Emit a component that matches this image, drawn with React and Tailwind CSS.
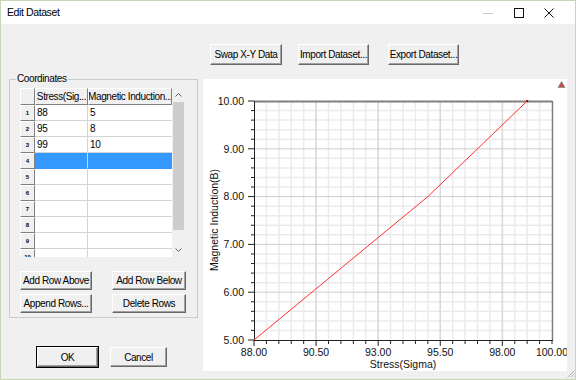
import React from 'react';

const rows = [
  ['88', '5'],
  ['95', '8'],
  ['99', '10'],
  ['', ''],
  ['', ''],
  ['', ''],
  ['', ''],
  ['', ''],
  ['', ''],
  ['', ''],
];

const WinButton = ({ children, className = '', isDefault = false }) => (
  <button
    className={`flex items-center justify-center bg-[#f0f0f0] text-[10px] tracking-[-0.4px] text-black border border-t-white border-l-white border-r-[#696969] border-b-[#696969] shadow-[inset_-1px_-1px_0_#a0a0a0] ${
      isDefault ? 'outline outline-1 outline-black' : ''
    } ${className}`}
  >
    {children}
  </button>
);

// plot area inside the white chart panel
const px = (v) => 51 + (v - 88) * (298 / 12);
const py = (v) => 261 - (v - 5) * (239 / 5);

const Chart = () => {
  const minorX = [];
  const majorX = [];
  for (let i = 1; i < 24; i++) {
    const v = 88 + i * 0.5;
    if (i % 5 === 0) majorX.push(v);
    else minorX.push(v);
  }
  const minorY = [];
  const majorY = [];
  for (let j = 1; j < 25; j++) {
    const v = 5 + j * 0.2;
    if (j % 5 === 0) majorY.push(v);
    else minorY.push(v);
  }
  const ticksX = [];
  for (let i = 0; i <= 24; i++) ticksX.push({ v: 88 + i * 0.5, major: i % 5 === 0 });
  const ticksY = [];
  for (let j = 0; j <= 25; j++) ticksY.push({ v: 5 + j * 0.2, major: j % 5 === 0 });

  return (
    <svg width="364" height="292" viewBox="0 0 364 292" className="block">
      {minorX.map((v) => (
        <line key={`mx${v}`} x1={px(v)} x2={px(v)} y1={22} y2={261} stroke="#ebebeb" strokeWidth="1.5" />
      ))}
      {minorY.map((v) => (
        <line key={`my${v}`} x1={51} x2={349} y1={py(v)} y2={py(v)} stroke="#ebebeb" strokeWidth="1.5" />
      ))}
      {majorX.map((v) => (
        <line key={`Mx${v}`} x1={px(v)} x2={px(v)} y1={22} y2={261} stroke="#d9d9d9" strokeWidth="1.6" />
      ))}
      {majorY.map((v) => (
        <line key={`My${v}`} x1={51} x2={349} y1={py(v)} y2={py(v)} stroke="#cdcdcd" strokeWidth="1" />
      ))}
      {/* frame */}
      <line x1={51} x2={349.5} y1={22.5} y2={22.5} stroke="#7f7f7f" strokeWidth="2" />
      <line x1={349.5} x2={349.5} y1={22} y2={261} stroke="#7f7f7f" strokeWidth="1.5" />
      <line x1={51.5} x2={51.5} y1={22} y2={261.5} stroke="#222" strokeWidth="1" />
      <line x1={51} x2={350} y1={261.5} y2={261.5} stroke="#222" strokeWidth="1" />
      {ticksY.map(({ v, major }) => (
        <line key={`ty${v}`} x1={major ? 45 : 48} x2={51} y1={py(v)} y2={py(v)} stroke="#222" strokeWidth="1" />
      ))}
      {ticksX.map(({ v, major }) => (
        <line key={`tx${v}`} x1={px(v)} x2={px(v)} y1={261} y2={major ? 267 : 265} stroke="#222" strokeWidth="1" />
      ))}
      {/* data */}
      <polyline
        points={`${px(88)},${py(5)} ${px(95)},${py(8)} ${px(99)},${py(10)}`}
        fill="none"
        stroke="#ff3030"
        strokeWidth="1"
      />
      <rect x={px(99) - 1} y={py(10) - 1} width="2" height="2" fill="#c00000" />
      {/* labels */}
      <g fontFamily="'Liberation Sans', Arial, sans-serif" fontSize="10.5" fill="#111">
        {[10, 9, 8, 7, 6, 5].map((v) => (
          <text key={`ly${v}`} x={41} y={py(v) + 3.8} textAnchor="end">
            {v.toFixed(2)}
          </text>
        ))}
        {[88, 90.5, 93, 95.5, 98, 100].map((v) => (
          <text key={`lx${v}`} x={px(v)} y={277} textAnchor="middle">
            {v.toFixed(2)}
          </text>
        ))}
        <text x={200} y={288.5} textAnchor="middle">
          Stress(Sigma)
        </text>
        <text x={0} y={0} textAnchor="middle" transform="translate(14.5 141) rotate(-90)">
          Magnetic Induction(B)
        </text>
      </g>
      {/* corner marker */}
      <path d="M358.5 2.5 L362 8.5 L355 8.5 Z" fill="#c84848" stroke="#8a8a8a" strokeWidth="0.8" />
    </svg>
  );
};

const Grid = () => (
  <div className="flex h-[169px] w-[165px] overflow-hidden bg-white">
    <div className="w-[152px] flex flex-col">
      <div className="flex h-[17px] shrink-0">
        <div className="w-[15px] bg-[#f0f0f0] border border-t-white border-l-white border-r-[#808080] border-b-[#808080]" />
        <div className="w-[53px] flex items-center justify-center bg-[#f0f0f0] border border-t-white border-l-white border-r-[#808080] border-b-[#808080] text-[10px] tracking-[-0.4px] whitespace-nowrap overflow-hidden">
          Stress(Sig...
        </div>
        <div className="w-[84px] flex items-center justify-center bg-[#f0f0f0] border border-t-white border-l-white border-r-[#808080] border-b-[#808080] text-[10px] tracking-[-0.4px] whitespace-nowrap overflow-hidden">
          Magnetic Induction...
        </div>
      </div>
      {rows.map((r, i) => {
        const selected = i === 3;
        return (
          <div key={i} className="flex h-[16px] shrink-0">
            <div className="w-[15px] flex items-center justify-center bg-[#f0f0f0] border border-t-white border-l-white border-r-[#808080] border-b-[#808080] text-[6px] font-bold">
              {i + 1}
            </div>
            <div
              className={`w-[53px] flex items-center pl-[2px] border-r border-b border-[#d4d4d4] text-[10px] tracking-[-0.3px] ${
                selected ? 'bg-[#3399ff] border-b-[#3399ff]' : ''
              }`}
            >
              {r[0]}
            </div>
            <div
              className={`w-[84px] flex items-center pl-[2px] border-b border-[#d4d4d4] text-[10px] tracking-[-0.3px] ${
                selected ? 'bg-[#3399ff] border-b-[#3399ff]' : ''
              }`}
            >
              {r[1]}
            </div>
          </div>
        );
      })}
    </div>
    <div className="w-[13px] flex flex-col bg-[#f0f0f0]">
      <div className="h-[14px] flex items-center justify-center">
        <svg width="7" height="4" viewBox="0 0 7 4">
          <polyline points="0.5,3.5 3.5,0.5 6.5,3.5" fill="none" stroke="#606060" strokeWidth="1" />
        </svg>
      </div>
      <div className="h-[128px] mx-[1px] bg-[#cdcdcd]" />
      <div className="flex-1" />
      <div className="h-[14px] flex items-center justify-center">
        <svg width="7" height="4" viewBox="0 0 7 4">
          <polyline points="0.5,0.5 3.5,3.5 6.5,0.5" fill="none" stroke="#606060" strokeWidth="1" />
        </svg>
      </div>
    </div>
  </div>
);

export default function App() {
  return (
    <div className="w-[576px] h-[380px] flex flex-col border border-[#c6d7b4] bg-[#f0f0f0] font-['Liberation_Sans',Arial,sans-serif] text-black overflow-hidden">
      {/* Title bar */}
      <div className="h-[23px] shrink-0 bg-white flex items-center">
        <span className="pl-[6px] text-[10.5px] tracking-[-0.4px]">Edit Dataset</span>
        <div className="ml-auto flex items-center pr-[21px]">
          <svg width="10" height="10" viewBox="0 0 10 10">
            <line x1="0" x2="10" y1="5.5" y2="5.5" stroke="#c8c8c8" strokeWidth="1" />
          </svg>
          <svg width="10" height="10" viewBox="0 0 10 10" className="ml-[21px]">
            <rect x="0.5" y="0.5" width="9" height="9" fill="none" stroke="#111" strokeWidth="1" />
          </svg>
          <svg width="10" height="10" viewBox="0 0 10 10" className="ml-[20px]">
            <path d="M0.5 0.5 L9.5 9.5 M9.5 0.5 L0.5 9.5" stroke="#111" strokeWidth="1" />
          </svg>
        </div>
      </div>

      {/* Top buttons */}
      <div className="flex pt-[20px] pl-[209px]">
        <WinButton className="w-[72px] h-[21px]">Swap X-Y Data</WinButton>
        <WinButton className="w-[71px] h-[21px] ml-[16px]">Import Dataset...</WinButton>
        <WinButton className="w-[71px] h-[21px] ml-[19px]">Export Dataset...</WinButton>
      </div>

      {/* Main */}
      <div className="flex flex-1 mt-[8px] pl-[8px]">
        <div className="w-[189px] flex flex-col">
          <fieldset className="border border-[#cbcbcb] w-[189px] p-0 m-0">
            <legend className="ml-[6px] px-[1px] text-[10px] tracking-[-0.4px] leading-[12px]">Coordinates</legend>
            <div className="pl-[10px] pt-[3px] pb-[4px]">
              <Grid />
              <div className="grid grid-cols-[72px_74px] gap-x-[20px] gap-y-[4px] mt-[14px]">
                <WinButton className="h-[19px]">Add Row Above</WinButton>
                <WinButton className="h-[19px]">Add Row Below</WinButton>
                <WinButton className="h-[19px]">Append Rows...</WinButton>
                <WinButton className="h-[19px]">Delete Rows</WinButton>
              </div>
            </div>
          </fieldset>
          <div className="flex mt-[29px] pl-[28px]">
            <WinButton isDefault className="w-[61px] h-[20px]">OK</WinButton>
            <WinButton className="w-[57px] h-[20px] ml-[12px]">Cancel</WinButton>
          </div>
        </div>

        <div className="ml-[5px] mt-[6px] w-[364px] h-[292px] bg-white shrink-0">
          <Chart />
        </div>

        <div className="w-[8px] flex flex-col justify-end pb-[1px]">
          <svg width="8" height="8" viewBox="0 0 8 8">
            <path d="M7.5 0.5 L0.5 7.5 M7.5 3.5 L3.5 7.5 M7.5 6.5 L6.5 7.5" stroke="#b5b5b5" strokeWidth="1" />
          </svg>
        </div>
      </div>
    </div>
  );
}
